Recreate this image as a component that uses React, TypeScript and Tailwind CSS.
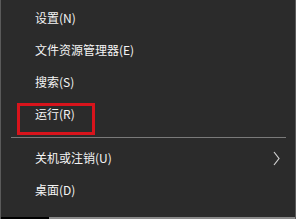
const top = ['设置(N)', '文件资源管理器(E)', '搜索(S)', '运行(R)'];

const Chevron = () => (
  <svg width="7" height="15" viewBox="0 0 7 15" fill="none">
    <polyline points="1,1 6,7.5 1,14" stroke="#d0d0d0" strokeWidth="1.2" />
  </svg>
);

const Row = ({ label, arrow }: { label: string; arrow?: boolean }) => (
  <div className="h-[32px] flex items-center pl-[34px] pr-[15px] text-[12px] text-[#f4f4f4]">
    <span className="flex-1">{label}</span>
    {arrow && <Chevron />}
  </div>
);

export default function App() {
  return (
    <div
      className="relative w-[296px] h-[219px] bg-[#2b2b2b] border-x border-[#5a5a5a] overflow-hidden"
      style={{ fontFamily: '"Microsoft YaHei", "Noto Sans CJK SC", sans-serif' }}
    >
      <div className="pt-[2px]">
        {top.map((t) => (
          <Row key={t} label={t} />
        ))}
      </div>
      <div className="mt-[7px] ml-[10px] mr-[9px] h-px bg-[#7a7a7a]" />
      <div className="pt-[4px]">
        <Row label="关机或注销(U)" arrow />
        <Row label="桌面(D)" />
      </div>
      <div className="absolute bottom-0 left-0 right-0 h-[2px] flex">
        <div className="w-[48px] bg-black" />
        <div className="flex-1 bg-[#8a8a8a]" />
      </div>
      <div className="absolute left-[16px] top-[103px] w-[78px] h-[32px] border-[3px] border-[#d8141c]" />
    </div>
  );
}
